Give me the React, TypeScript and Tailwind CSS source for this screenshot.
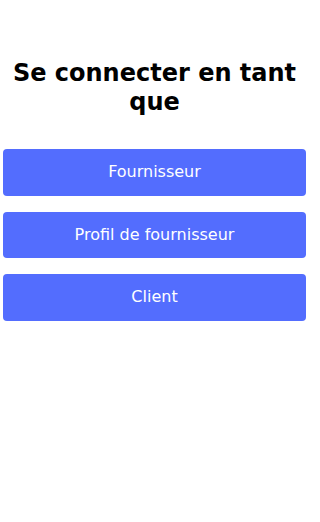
export default function App() {
  const roles = ['Fournisseur', 'Profil de fournisseur', 'Client'];

  return (
    <div className="min-h-[522px] bg-white font-['DejaVu_Sans',sans-serif]">
      <div className="pl-[3px] w-[306px]">
        <h1 className="pt-[59px] px-2 text-center text-[24px] leading-[29px] font-bold text-black">
          Se connecter en tant que
        </h1>
        <div className="mt-[32px] flex flex-col gap-[16px]">
          {roles.map((r) => (
            <button
              key={r}
              className="h-[46.5px] w-full rounded-[4px] bg-[#536dfe] text-[16px] text-white"
            >
              {r}
            </button>
          ))}
        </div>
      </div>
    </div>
  );
}
